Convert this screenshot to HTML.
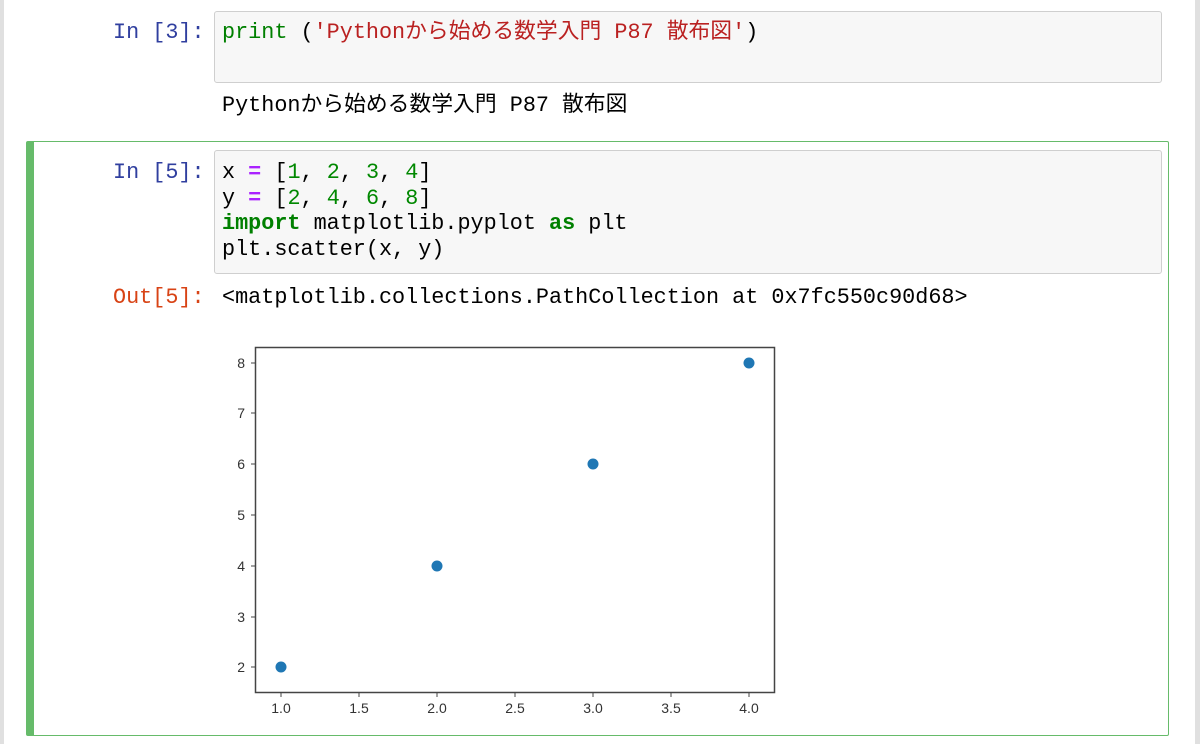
<!DOCTYPE html>
<html><head><meta charset="utf-8"><style>
body{margin:0;width:1200px;height:744px;background:#fff;position:relative;overflow:hidden;font-family:"Liberation Mono","Noto Sans CJK JP",monospace;}
.ls{position:absolute;left:0;top:0;width:4px;height:744px;background:#e0e0e0}
.rs{position:absolute;right:0;top:0;width:5px;height:744px;background:#e0e0e0}
.box{position:absolute;left:214px;width:946px;background:#f7f7f7;border:1px solid #cfcfcf;border-radius:3px}
.t{position:absolute;font-size:21.8px;line-height:25.6px;white-space:pre;color:#000}
.pr{color:#303f9f}.or{color:#d84315}
.g{color:#008000;font-weight:bold}.s{color:#ba2121}.n{color:#080}.o{color:#a2f;font-weight:bold}
.cell{position:absolute;left:26px;top:141px;width:1143px;height:595px;border:1px solid #66bb6a;border-left:8px solid #66bb6a;box-sizing:border-box;border-radius:2px}
</style></head><body>
<div class="ls"></div><div class="rs"></div>
<div class="box" style="top:11px;height:70px"></div>
<div class="t pr" style="left:113px;top:20px">In [3]:</div>
<div class="t" style="left:222px;top:20px"><span style="color:#008000">print</span> (<span class="s">'Pythonから始める数学入門 P87 散布図'</span>)</div>
<div class="t" style="left:222px;top:93px;font-family:'Liberation Mono','Noto Sans CJK JP',monospace">Pythonから始める数学入門 P87 散布図</div>
<div class="cell"></div>
<div class="box" style="top:150px;height:122px"></div>
<div class="t pr" style="left:113px;top:160px">In [5]:</div>
<div class="t" style="left:222px;top:160px">x <span class="o">=</span> [<span class="n">1</span>, <span class="n">2</span>, <span class="n">3</span>, <span class="n">4</span>]
y <span class="o">=</span> [<span class="n">2</span>, <span class="n">4</span>, <span class="n">6</span>, <span class="n">8</span>]
<span class="g">import</span> matplotlib.pyplot <span class="g">as</span> plt
plt.scatter(x, y)</div>
<div class="t or" style="left:113px;top:285px">Out[5]:</div>
<div class="t" style="left:222px;top:285px">&lt;matplotlib.collections.PathCollection at 0x7fc550c90d68&gt;</div>
<svg style="position:absolute;left:0;top:0" width="1200" height="744">
<rect x="255.5" y="347.5" width="519" height="345" fill="#fff" stroke="#444" stroke-width="1.5"/>
<g stroke="#444" stroke-width="1">
<line x1="251" x2="255" y1="363" y2="363"/><line x1="251" x2="255" y1="413" y2="413"/><line x1="251" x2="255" y1="464" y2="464"/><line x1="251" x2="255" y1="515" y2="515"/><line x1="251" x2="255" y1="566" y2="566"/><line x1="251" x2="255" y1="617" y2="617"/><line x1="251" x2="255" y1="667" y2="667"/>
<line y1="692" y2="697" x1="281" x2="281"/><line y1="692" y2="697" x1="359" x2="359"/><line y1="692" y2="697" x1="437" x2="437"/><line y1="692" y2="697" x1="515" x2="515"/><line y1="692" y2="697" x1="593" x2="593"/><line y1="692" y2="697" x1="671" x2="671"/><line y1="692" y2="697" x1="749" x2="749"/>
</g>
<g font-family="Liberation Sans,sans-serif" font-size="14" fill="#333" text-anchor="end">
<text x="245" y="368">8</text><text x="245" y="418">7</text><text x="245" y="469">6</text><text x="245" y="520">5</text><text x="245" y="571">4</text><text x="245" y="622">3</text><text x="245" y="672">2</text>
</g>
<g font-family="Liberation Sans,sans-serif" font-size="14" fill="#333" text-anchor="middle">
<text x="281" y="713">1.0</text><text x="359" y="713">1.5</text><text x="437" y="713">2.0</text><text x="515" y="713">2.5</text><text x="593" y="713">3.0</text><text x="671" y="713">3.5</text><text x="749" y="713">4.0</text>
</g>
<g fill="#1f77b4"><circle cx="281" cy="667" r="5.5"/><circle cx="437" cy="566" r="5.5"/><circle cx="593" cy="464" r="5.5"/><circle cx="749" cy="363" r="5.5"/></g>
</svg>
</body></html>
